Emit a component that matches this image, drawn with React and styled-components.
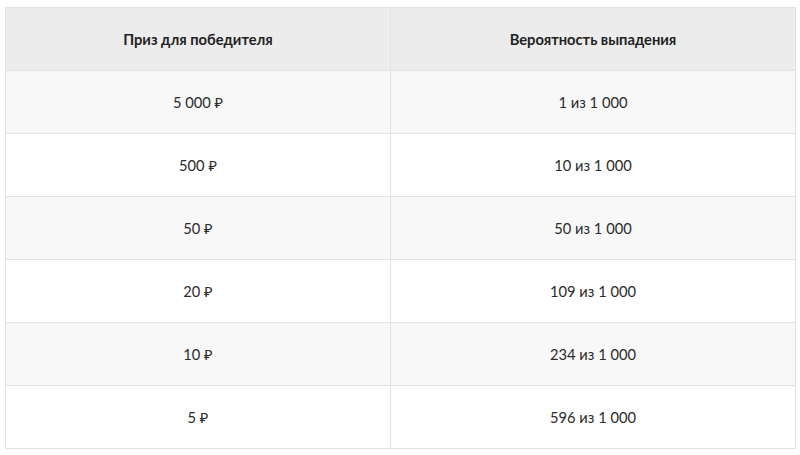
import React from 'react';
import styled, { createGlobalStyle } from 'styled-components';

const Global = createGlobalStyle`
  body {
    margin: 0;
    background: #fff;
    font-family: Lato, "Noto Sans", sans-serif;
    color: #2b2b2b;
  }
`;

const Page = styled.div`
  padding: 7px 5px;
`;

const Table = styled.table`
  width: 791px;
  border-collapse: collapse;
  table-layout: fixed;
  font-size: 14.7px;
`;

const HeadCell = styled.th`
  height: 62px;
  padding: 0;
  background: #ececec;
  border: 1px solid #e2e2e2;
  font-weight: 700;
  text-align: center;
  color: #222;
`;

const Row = styled.tr`
  background: ${p => (p.$shade ? '#f8f8f8' : '#fff')};
`;

const Cell = styled.td`
  height: 62px;
  padding: 0;
  border: 1px solid #e2e2e2;
  text-align: center;
`;

//prize / chance
const rows = [
  ['5 000 ₽', '1 из 1 000'],
  ['500 ₽', '10 из 1 000'],
  ['50 ₽', '50 из 1 000'],
  ['20 ₽', '109 из 1 000'],
  ['10 ₽', '234 из 1 000'],
  ['5 ₽', '596 из 1 000'],
];

const App = () => {
  return (
    <Page>
      <Global />
      <Table>
        <colgroup>
          <col style={{ width: 385 }} />
          <col />
        </colgroup>
        <thead>
          <tr>
            <HeadCell>Приз для победителя</HeadCell>
            <HeadCell>Вероятность выпадения</HeadCell>
          </tr>
        </thead>
        <tbody>
          {rows.map((r, i) => (
            <Row key={i} $shade={i % 2 === 0}>
              <Cell>{r[0]}</Cell>
              <Cell>{r[1]}</Cell>
            </Row>
          ))}
        </tbody>
      </Table>
    </Page>
  );
};

export default App;
